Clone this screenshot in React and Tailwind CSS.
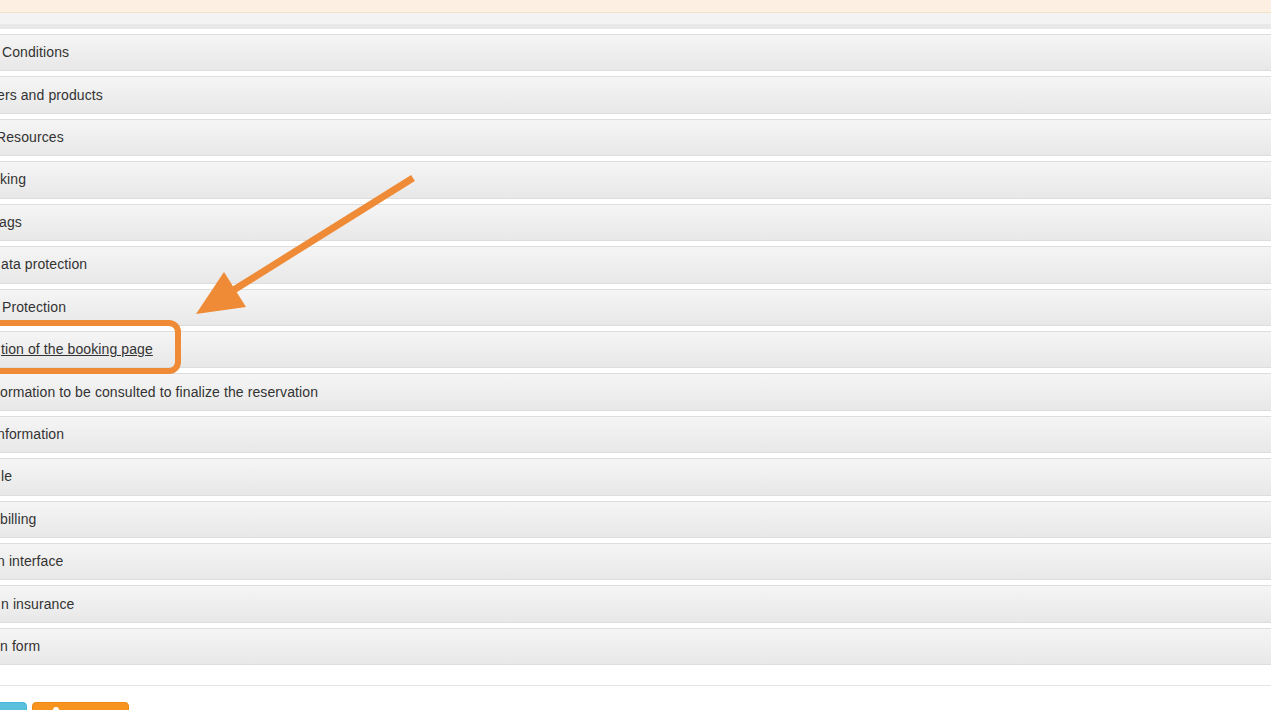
import React from 'react';

const rows = [
    { text: 'Conditions', x: 2 },
    { text: 'ers and products', x: -3 },
    { text: 'Resources', x: -4 },
    { text: 'king', x: 0 },
    { text: 'ags', x: -1 },
    { text: 'ata protection', x: 1 },
    { text: 'Protection', x: 2 },
    { text: 'tion of the booking page', x: 1, link: true },
    { text: 'ormation to be consulted to finalize the reservation', x: 0 },
    { text: 'nformation', x: -3 },
    { text: 'le', x: 1 },
    { text: 'billing', x: 0 },
    { text: 'n interface', x: -3 },
    { text: 'n insurance', x: 1 },
    { text: 'n form', x: 0 },
];

const App = () => {
    return (
        <div className="relative w-full h-[710px] overflow-hidden bg-white text-[14px] tracking-[0.1px] text-[#333] font-['Liberation_Sans',Arial,sans-serif]">
            {/* notice strip and tab bar */}
            <div className="h-[13px] bg-[#fdf0e2] border-b border-[#f4e2c8]" />
            <div className="h-[11px] bg-[#f3f3f3]" />
            <div className="h-[5px] bg-[#e8e8e8]" />

            {/* accordion headings */}
            <div className="mt-[5px] flex flex-col gap-[5px] -mx-[10px]">
                {rows.map((row, i) => (
                    <div
                        key={i}
                        className="h-[37.43px] flex items-center border border-[#dddddd] bg-linear-to-b from-[#f5f5f5] to-[#e8e8e8] overflow-hidden"
                    >
                        <span
                            className={row.link ? 'underline whitespace-nowrap' : 'whitespace-nowrap'}
                            style={{ marginLeft: 9 + row.x }}
                        >
                            {row.text}
                        </span>
                    </div>
                ))}
            </div>

            <div className="mt-[20px] border-t border-[#e5e5e5]" />

            {/* buttons, cut at the bottom */}
            <div className="mt-[16px] flex gap-[5px] -ml-[10px]">
                <div className="w-[37px] h-[30px] rounded-[4px] bg-[#5bc0de] border border-[#46b8da]" />
                <div className="w-[97px] h-[30px] rounded-[4px] bg-[#f7931e] border border-[#ee8a14] flex justify-center pt-[4px] pr-[50px]">
                    <span className="block w-[6px] h-[6px] rounded-full bg-white" />
                </div>
            </div>

            {/* annotation overlay */}
            <svg className="absolute left-0 top-0 pointer-events-none" width="1271" height="710">
                <rect x="-20" y="323" width="198" height="48" rx="9" fill="none" stroke="#ef8b36" strokeWidth="6" />
                <line x1="413" y1="178" x2="232" y2="291" stroke="#ef8b36" strokeWidth="7" />
                <polygon points="196,314 224,272 246,307" fill="#ef8b36" />
            </svg>
        </div>
    );
};

export default App;
